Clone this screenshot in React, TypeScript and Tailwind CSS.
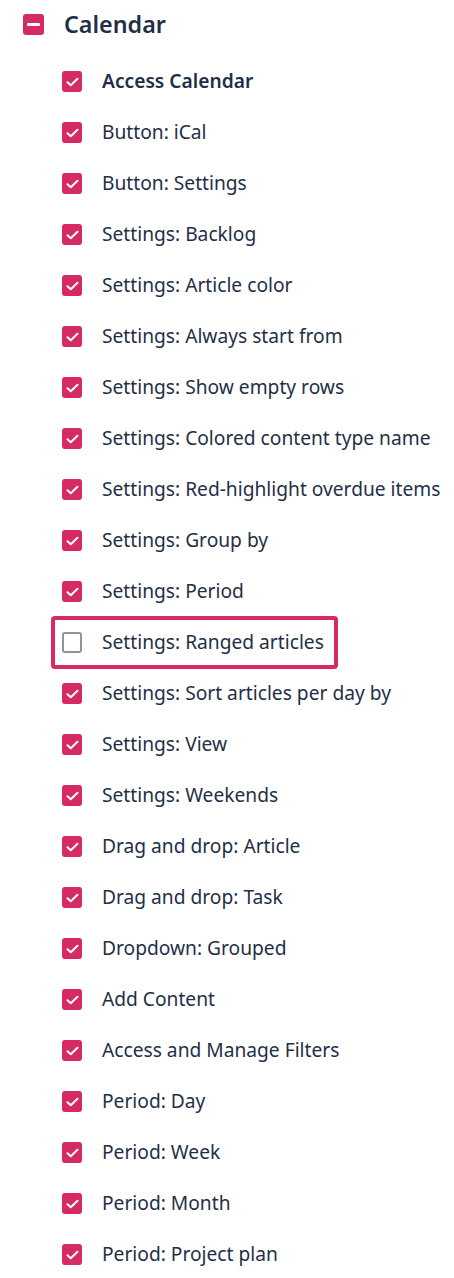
import React from 'react';

const items: { label: string; checked: boolean; bold?: boolean; flagged?: boolean }[] = [
  { label: 'Access Calendar', checked: true, bold: true },
  { label: 'Button: iCal', checked: true },
  { label: 'Button: Settings', checked: true },
  { label: 'Settings: Backlog', checked: true },
  { label: 'Settings: Article color', checked: true },
  { label: 'Settings: Always start from', checked: true },
  { label: 'Settings: Show empty rows', checked: true },
  { label: 'Settings: Colored content type name', checked: true },
  { label: 'Settings: Red-highlight overdue items', checked: true },
  { label: 'Settings: Group by', checked: true },
  { label: 'Settings: Period', checked: true },
  { label: 'Settings: Ranged articles', checked: false, flagged: true },
  { label: 'Settings: Sort articles per day by', checked: true },
  { label: 'Settings: View', checked: true },
  { label: 'Settings: Weekends', checked: true },
  { label: 'Drag and drop: Article', checked: true },
  { label: 'Drag and drop: Task', checked: true },
  { label: 'Dropdown: Grouped', checked: true },
  { label: 'Add Content', checked: true },
  { label: 'Access and Manage Filters', checked: true },
  { label: 'Period: Day', checked: true },
  { label: 'Period: Week', checked: true },
  { label: 'Period: Month', checked: true },
  { label: 'Period: Project plan', checked: true },
];

const Box = ({ checked }: { checked: boolean }) =>
  checked ? (
    <div className="w-[20px] h-[21px] rounded-[3px] bg-[#d52a63] flex items-center justify-center shrink-0">
      <svg width="13" height="10" viewBox="0 0 13 10" fill="none">
        <path d="M1.5 5.2 L4.8 8.3 L11.5 1.7" stroke="white" strokeWidth="2" strokeLinecap="round" strokeLinejoin="round" />
      </svg>
    </div>
  ) : (
    <div className="w-[20px] h-[21px] rounded-[3px] border-2 border-[#8b94a1] bg-white shrink-0" />
  );

export default function App() {
  return (
    <div className="w-[454px] h-[1278px] bg-white text-[#1f2f48] font-['Noto_Sans',sans-serif] overflow-hidden">
      <div className="flex items-center h-[49px] pl-[23px]">
        <div className="w-[21px] h-[21px] rounded-[3px] bg-[#d52a63] flex items-center justify-center">
          <div className="w-[13px] h-[3px] bg-white rounded-[1px]" />
        </div>
        <span className="ml-[20px] text-[23.3px] font-semibold">Calendar</span>
      </div>
      <div className="flex flex-col pl-[62px] pt-[7px]">
        {items.map((it) =>
          it.flagged ? (
            <div
              key={it.label}
              className="flex items-center h-[53px] -my-[1px] -ml-[11px] pl-[7px] pr-[10px] w-fit border-4 border-[#d52a63] rounded-[4px]"
            >
              <Box checked={it.checked} />
              <span className="ml-[20px] text-[19.2px]">{it.label}</span>
            </div>
          ) : (
            <div key={it.label} className="flex items-center h-[51px]">
              <Box checked={it.checked} />
              <span className={`ml-[20px] text-[19.2px] ${it.bold ? 'font-semibold' : ''}`}>{it.label}</span>
            </div>
          )
        )}
      </div>
    </div>
  );
}
